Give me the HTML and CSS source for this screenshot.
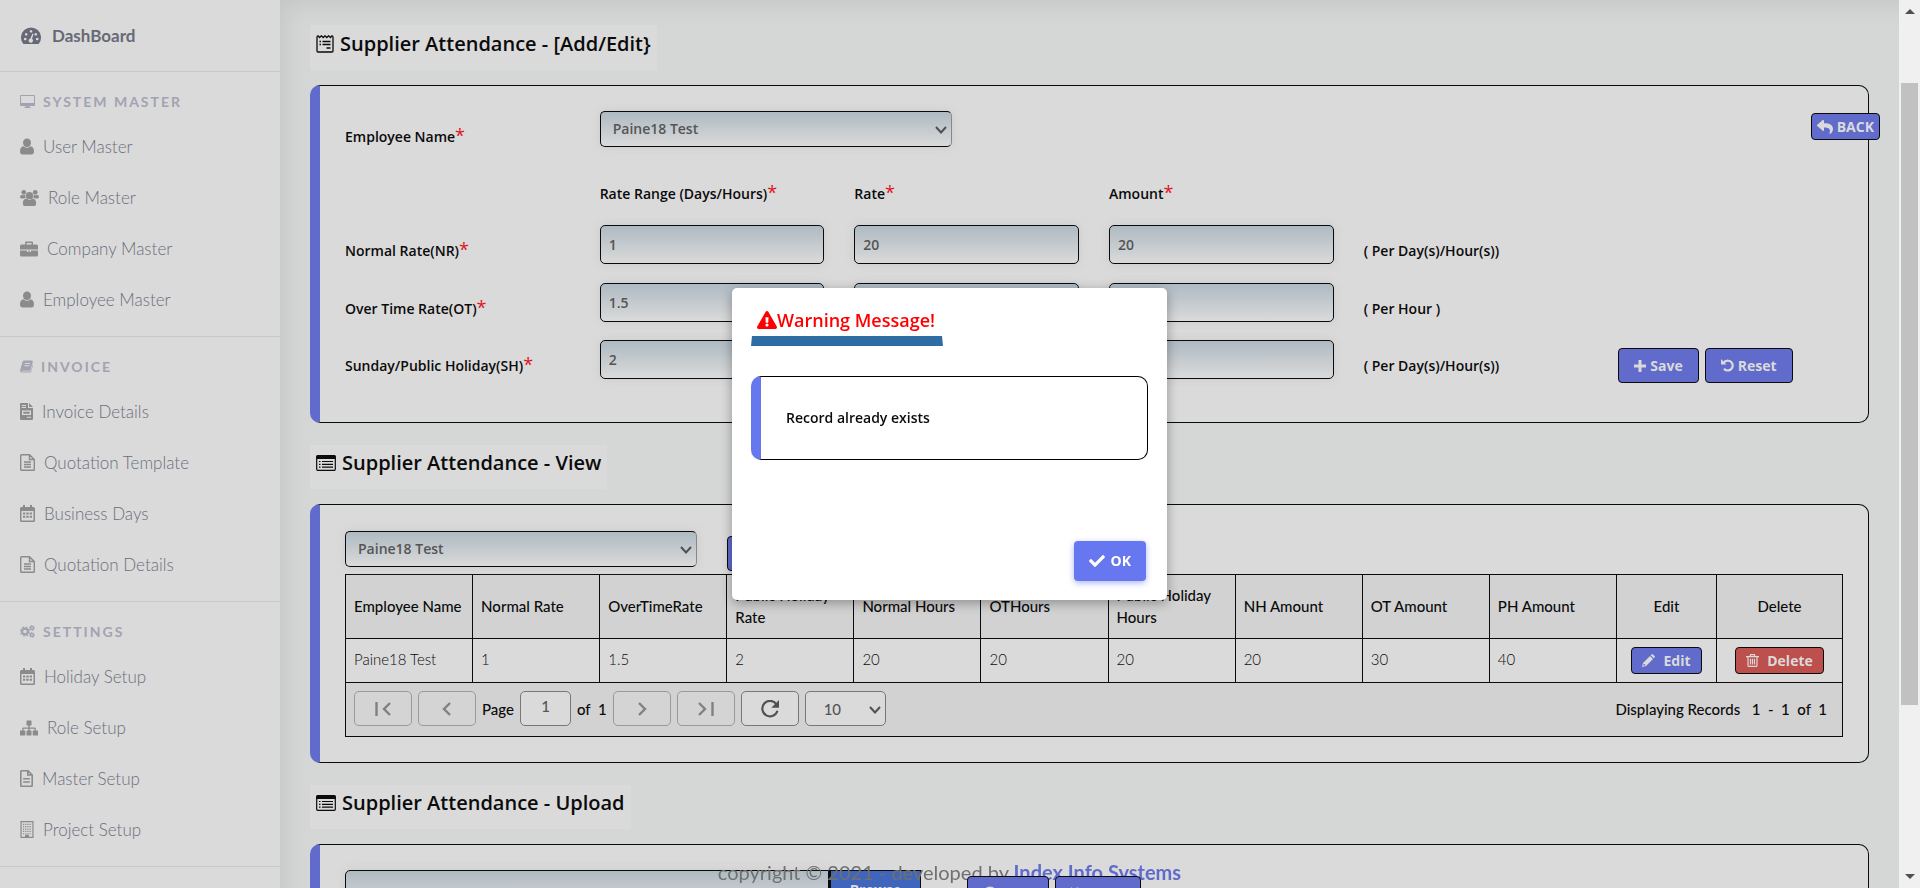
FILE: index.html
```html
<!DOCTYPE html>
<html lang="en">
<head>
<meta charset="utf-8">
<title>Supplier Attendance</title>
<link rel="stylesheet" href="styles.css">
</head>
<body>
<svg class="sprite" aria-hidden="true">
  <symbol id="gauge" viewBox="0 0 20 16"><path fill-rule="evenodd" d="M2 15.500A10 10 0 1 1 18 15.500Q17.500 16 17 16H3Q2.500 16 2 15.500ZM4.200 9.700a1.300 1.300 0 1 0 .01 0ZM5.200 5a1.300 1.300 0 1 0 .01 0ZM10 2a1.300 1.300 0 1 0 .01 0ZM14.800 5a1.300 1.300 0 1 0 .01 0ZM16.200 9.700a1.300 1.300 0 1 0 .01 0ZM11.500 5.600L9.400 10.400A2.200 2.200 0 1 0 11 10.700L12.600 6Z"/></symbol>
  <symbol id="desktop" viewBox="0 0 15 13"><path fill-rule="evenodd" d="M1 0H14Q15 0 15 1V10Q15 11 14 11H9.500V12H10.500V13H4.500V12H5.500V11H1Q0 11 0 10V1Q0 0 1 0ZM1 1V8H14V1Z"/></symbol>
  <symbol id="user" viewBox="0 0 14 16"><path d="M7 0C9.400 0 11 1.700 11 4.200S9.300 8.600 7 8.600S3 6.700 3 4.200S4.600 0 7 0ZM3.600 7.700Q7 11 10.400 7.700C13 8 14 10 14 13Q14 16 11.300 16H2.700Q0 16 0 13C0 10 1 8 3.600 7.700Z"/></symbol>
  <symbol id="users" viewBox="0 0 20 17"><circle cx="10" cy="6" r="3.800"/><circle cx="4" cy="2.500" r="2.500"/><circle cx="16" cy="2.500" r="2.500"/><path d="M6.700 9Q10 12 13.300 9C16 9.500 17 11.500 17 14Q17 17 14.300 17H5.700Q3 17 3 14C3 11.500 4 9.500 6.700 9ZM2 5Q4 6.300 5.500 5.200Q5.300 7 6.200 8.200Q5 8.200 4 9H1.500Q0 9 0 7.500Q0 5.300 2 5ZM18 5Q16 6.300 14.500 5.200Q14.700 7 13.800 8.200Q15 8.200 16 9H18.500Q20 9 20 7.500Q20 5.300 18 5Z"/></symbol>
  <symbol id="briefcase" viewBox="0 0 18 15"><path fill-rule="evenodd" d="M5 3V1Q5 0 6 0H12Q13 0 13 1V3H16.500Q18 3 18 4.500V8H0V4.500Q0 3 1.500 3ZM6.500 3H11.500V1.500H6.500ZM0 9H7V10.500H11V9H18V13.500Q18 15 16.500 15H1.500Q0 15 0 13.500ZM8 9H10V10H8Z"/></symbol>
  <symbol id="book" viewBox="0 0 13 12"><path fill-rule="evenodd" d="M4 0H12Q13 .5 12.800 1.500L10.500 9.500Q10.200 10.300 9.300 10.300H2Q1.200 10.400 1.600 11H9.600Q10.600 11 11 10L12.800 3.500Q13.300 4 13 4.800L11.400 10.500Q11 12 9.500 12H1.500Q0 11.500 0 10L2.500 1.500Q2.900 0 4 0ZM5 2.500L4.800 3.400H10L10.300 2.500ZM4.400 4.800L4.200 5.700H9.400L9.600 4.800Z"/></symbol>
  <symbol id="invoice" viewBox="0 0 13 17"><path fill-rule="evenodd" d="M1 0H8V5H13V16Q13 17 12 17H1Q0 17 0 16V1Q0 0 1 0ZM9 0L13 4H9ZM1.700 2V3H6V2ZM1.700 4V5H6V4ZM2 7.500V12H11V7.500ZM3.300 8.700H9.700V10.800H3.300ZM7 13.700V14.700H11V13.700Z"/></symbol>
  <symbol id="file" viewBox="0 0 15 17"><path fill="none" stroke="currentColor" stroke-width="1.400" d="M1.500.7H9.500L14.300 5.500V15.500Q14.300 16.300 13.500 16.300H1.500Q.7 16.300 .7 15.500V1.500Q.7 .7 1.500 .7ZM9.500 .7V5.500H14.300M4 8H11M4 10.500H11M4 13H11"/></symbol>
  <symbol id="file2" viewBox="0 0 13 17"><path fill="none" stroke="currentColor" stroke-width="1.600" d="M1.500.8H8L12.200 5V15.500Q12.200 16.200 11.500 16.200H1.500Q.8 16.200 .8 15.500V1.500Q.8 .8 1.500 .8ZM7.800 .8V5H12.200M3.200 8.800H9.800M3.200 12H9.800"/></symbol>
  <symbol id="calendar" viewBox="0 0 15 17"><path fill-rule="evenodd" d="M3 0H5V2H10V0H12V2H13.500Q15 2 15 3.500V15.500Q15 17 13.500 17H1.500Q0 17 0 15.500V3.500Q0 2 1.500 2H3ZM1.500 6V15.500H13.500V6ZM3 7.500H5.300V9.500H3ZM6.300 7.500H8.700V9.500H6.300ZM9.700 7.500H12V9.500H9.700ZM3 10.700H5.300V12.700H3ZM6.300 10.700H8.700V12.700H6.300ZM9.700 10.700H12V12.700H9.700Z"/></symbol>
  <symbol id="cogs" viewBox="0 0 15 13"><circle cx="5" cy="6.500" r="2.900" fill="none" stroke="currentColor" stroke-width="2.200"/><circle cx="5" cy="6.500" r="4.400" fill="none" stroke="currentColor" stroke-width="1.500" stroke-dasharray="1.700 1.750"/><g fill="none" stroke="currentColor"><circle cx="12" cy="3" r="1.600" stroke-width="1.500"/><circle cx="12" cy="3" r="2.500" stroke-dasharray="1.200 1.400"/><circle cx="12" cy="10" r="1.600" stroke-width="1.500"/><circle cx="12" cy="10" r="2.500" stroke-dasharray="1.200 1.400"/></g></symbol>
  <symbol id="sitemap" viewBox="0 0 18 15"><path d="M7 0H11Q11.500 0 11.500 .5V4.500Q11.500 5 11 5H9.700V7H14.500Q15.800 7 15.800 8.300V10H17.500Q18 10 18 10.500V14.500Q18 15 17.500 15H13.200Q12.700 15 12.700 14.500V10.500Q12.700 10 13.200 10H14.500V8.300H9.700V10H11Q11.500 10 11.500 10.500V14.500Q11.500 15 11 15H7Q6.500 15 6.500 14.500V10.500Q6.500 10 7 10H8.300V8.300H3.500V10H4.800Q5.300 10 5.300 10.500V14.500Q5.300 15 4.800 15H.5Q0 15 0 14.500V10.500Q0 10 .5 10H2.200V8.300Q2.200 7 3.500 7H8.300V5H7Q6.500 5 6.500 4.500V.5Q6.500 0 7 0Z"/></symbol>
  <symbol id="building" viewBox="0 0 14 18"><path fill="none" stroke="currentColor" stroke-width="1.300" d="M.7 .7H13.300V17.300H.7Z"/><path fill="none" stroke="currentColor" stroke-width="1.300" stroke-dasharray="1.300 1" d="M2.700 3.500H12M2.700 6H12M2.700 8.500H12M2.700 11H12M2.700 13.500H12"/><path d="M5 14.500H9V17.500H5Z"/></symbol>
  <symbol id="form" viewBox="0 0 18 18"><path fill="none" stroke="currentColor" stroke-width="1.300" d="M1 1.500V16Q1 17 2 17H16Q17 17 17 16V1.500M1 1.500L2 .8L3.600 2.500L5.400 .8L7.200 2.500L9 .8L10.800 2.500L12.600 .8L14.400 2.500L16 .8L17 1.500M3.500 6.500H5M6.500 6.500H14.500M3.500 9.500H5M6.500 9.500H14.500M10.500 13H14.500"/></symbol>
  <symbol id="list" viewBox="0 0 20 16"><path fill="none" stroke="currentColor" stroke-width="1.200" d="M.7 3V14.300Q.7 15.300 1.700 15.300H18.300Q19.300 15.300 19.300 14.300V3M3 6.500H4.500M6 6.500H17M3 9.300H4.500M6 9.300H17M3 12.100H4.500M6 12.100H17"/><path d="M0 4V1.500Q0 0 1.500 0H18.500Q20 0 20 1.500V4Z"/></symbol>
  <symbol id="reply" viewBox="0 20 512 480"><path d="M8.309 189.836L184.313 37.851C199.719 24.546 224 35.347 224 56.015v80.053c160.629 1.839 288 34.032 288 186.258 0 61.441-39.581 122.309-83.333 154.132-13.653 9.931-33.111-2.533-28.077-18.631 45.344-145.012-21.507-183.510-176.590-185.742V360c0 20.700-24.300 31.453-39.687 18.164l-176.004-152c-11.071-9.562-11.086-26.753 0-36.328z"/></symbol>
  <symbol id="plus" viewBox="0 0 12 12"><path d="M4.500 0H7.500V4.500H12V7.500H7.500V12H4.500V7.500H0V4.500H4.500Z"/></symbol>
  <symbol id="undo" viewBox="0 0 13 13"><path d="M0 0V5.500H5.500Z"/><path fill="none" stroke="currentColor" stroke-width="2.200" d="M2 4.300Q4.300 1.300 7.300 1.700A4.900 4.900 0 1 1 3 9.700"/></symbol>
  <symbol id="pencil" viewBox="0 0 13 13"><path fill-rule="evenodd" d="M8 2L11 5L4 12L0 13L1 9ZM8.700 1.300L9.600 .4Q10.200 -.2 10.900 .4L12.600 2.100Q13.200 2.800 12.600 3.400L11.700 4.300ZM1.800 9.800L1.300 11.300L1.900 11.800L3.300 11.300L3.300 10.400L2.500 10.300Z"/></symbol>
  <symbol id="trash" viewBox="0 0 13 13"><path fill="none" stroke="currentColor" stroke-width="1.200" d="M0 2.600H13M4 2.500L4.600 .7H8.400L9 2.500M2 3V11.500Q2 12.400 3 12.400H10Q11 12.400 11 11.500V3M4.500 4.800V10.500M6.500 4.800V10.500M8.500 4.800V10.500"/></symbol>
  <symbol id="check" viewBox="0 60 512 390"><path d="M173.898 439.404l-166.400-166.400c-9.997-9.997-9.997-26.206 0-36.204l36.203-36.204c9.997-9.998 26.207-9.998 36.204 0L192 312.690 432.095 72.596c9.997-9.997 26.207-9.997 36.204 0l36.203 36.204c9.997 9.997 9.997 26.206 0 36.204l-294.400 294.401c-9.998 9.997-26.207 9.997-36.204-.001z"/></symbol>
  <symbol id="warn" viewBox="0 0 576 512"><path d="M569.517 440.013C587.975 472.007 564.806 512 527.940 512H48.054c-36.937 0-59.999-40.055-41.577-71.987L246.423 23.985c18.467-32.009 64.720-31.951 83.154 0l239.940 416.028zM288 354c-25.405 0-46 20.595-46 46s20.595 46 46 46 46-20.595 46-46-20.595-46-46-46zm-43.673-165.346l7.418 136c.347 6.364 5.609 11.346 11.982 11.346h48.546c6.373 0 11.635-4.982 11.982-11.346l7.418-136c.375-6.874-5.098-12.654-11.982-12.654h-63.383c-6.884 0-12.356 5.780-11.981 12.654z"/></symbol>
  <symbol id="first" viewBox="0 0 16 16"><path fill="none" stroke="currentColor" stroke-width="2.400" d="M1.500 1V15M15 2L9 8L15 14"/></symbol>
  <symbol id="prev" viewBox="0 0 16 16"><path fill="none" stroke="currentColor" stroke-width="2.400" d="M11 2L5 8L11 14"/></symbol>
  <symbol id="next" viewBox="0 0 16 16"><path fill="none" stroke="currentColor" stroke-width="2.400" d="M5 2L11 8L5 14"/></symbol>
  <symbol id="last" viewBox="0 0 16 16"><path fill="none" stroke="currentColor" stroke-width="2.400" d="M1 2L7 8L1 14M14.500 1V15"/></symbol>
  <symbol id="refresh" viewBox="0 0 20 20"><path fill="none" stroke="currentColor" stroke-width="2.400" d="M17 4.500A8.600 8.600 0 1 0 18.300 12"/><path d="M20 0V8.500H11.500Z"/></symbol>
  <symbol id="chevron" viewBox="0 0 12 8"><path fill="none" stroke="currentColor" stroke-width="2" d="M1 1L6 6.500L11 1"/></symbol>
  <symbol id="search" viewBox="0 0 13 13"><circle cx="5.500" cy="5.500" r="4.300" fill="none" stroke="currentColor" stroke-width="2.200"/><path stroke="currentColor" stroke-width="2.400" d="M8.500 8.500L12.500 12.500"/></symbol>
  <symbol id="circle" viewBox="0 0 14 14"><circle cx="7" cy="7" r="7"/></symbol>
</svg>

<div class="page">
  <nav class="sidebar">
    <a class="dash" href="#"><svg class="i20"><use href="#gauge"/></svg>DashBoard</a>
    <section class="group">
      <h2><svg class="i15"><use href="#desktop"/></svg>SYSTEM MASTER</h2>
      <a href="#"><svg class="i14"><use href="#user"/></svg>User Master</a>
      <a href="#"><svg class="i19"><use href="#users"/></svg>Role Master</a>
      <a href="#"><svg class="i18"><use href="#briefcase"/></svg>Company Master</a>
      <a href="#"><svg class="i14"><use href="#user"/></svg>Employee Master</a>
    </section>
    <section class="group">
      <h2><svg class="i13"><use href="#book"/></svg>INVOICE</h2>
      <a href="#"><svg class="i13"><use href="#invoice"/></svg>Invoice Details</a>
      <a href="#"><svg class="i15"><use href="#file"/></svg>Quotation Template</a>
      <a href="#"><svg class="i15"><use href="#calendar"/></svg>Business Days</a>
      <a href="#"><svg class="i15"><use href="#file"/></svg>Quotation Details</a>
    </section>
    <section class="group">
      <h2><svg class="i15"><use href="#cogs"/></svg>SETTINGS</h2>
      <a href="#"><svg class="i15"><use href="#calendar"/></svg>Holiday Setup</a>
      <a href="#"><svg class="i18"><use href="#sitemap"/></svg>Role Setup</a>
      <a href="#"><svg class="i13"><use href="#file2"/></svg>Master Setup</a>
      <a href="#"><svg class="i14"><use href="#building"/></svg>Project Setup</a>
    </section>
    <section class="group"></section>
  </nav>

  <main class="main">
    <h1 class="title"><svg class="i18"><use href="#form"/></svg>Supplier Attendance - [Add/Edit}</h1>
    <form class="card rates">
      <label class="c2 lab" for="emp">Employee Name<b>*</b></label>
      <div class="c3 pick"><select id="emp"><option>Paine18 Test</option></select><svg class="i12"><use href="#chevron"/></svg></div>
      <div class="c7 end"><button type="button" class="btn back"><svg class="i16"><use href="#reply"/></svg>BACK</button></div>

      <span class="c2"></span>
      <span class="c2 lab">Rate Range (Days/Hours)<b>*</b></span>
      <span class="c2 lab">Rate<b>*</b></span>
      <span class="c6 lab">Amount<b>*</b></span>

      <label class="c2 lab" for="nr">Normal Rate(NR)<b>*</b></label>
      <div class="c2"><input id="nr" value="1"></div>
      <div class="c2"><input aria-label="Normal rate" value="20"></div>
      <div class="c2"><input aria-label="Normal amount" value="20"></div>
      <span class="c4 lab">( Per Day(s)/Hour(s))</span>

      <label class="c2 lab" for="ot">Over Time Rate(OT)<b>*</b></label>
      <div class="c2"><input id="ot" value="1.5"></div>
      <div class="c2"><input aria-label="Overtime rate" value=""></div>
      <div class="c2"><input aria-label="Overtime amount" value=""></div>
      <span class="c4 lab">( Per Hour )</span>

      <label class="c2 lab" for="sh">Sunday/Public Holiday(SH)<b>*</b></label>
      <div class="c2"><input id="sh" value="2"></div>
      <div class="c2"><input aria-label="Holiday rate" value=""></div>
      <div class="c2"><input aria-label="Holiday amount" value=""></div>
      <span class="c2 lab">( Per Day(s)/Hour(s))</span>
      <div class="c2 actions"><button type="button" class="btn wide"><svg class="i12"><use href="#plus"/></svg>Save</button><button type="button" class="btn wide"><svg class="i13"><use href="#undo"/></svg>Reset</button></div>
    </form>

    <h1 class="title"><svg class="i20"><use href="#list"/></svg>Supplier Attendance - View</h1>
    <section class="card">
      <div class="filter">
        <div class="pick"><select aria-label="Employee"><option>Paine18 Test</option></select><svg class="i12"><use href="#chevron"/></svg></div>
        <button type="button" class="btn wide"><svg class="i13"><use href="#search"/></svg>Search</button>
      </div>
      <table class="grid">
        <colgroup><col><col><col><col><col><col><col><col><col><col><col class="edit"><col class="del"></colgroup>
        <thead><tr><th>Employee Name</th><th>Normal Rate</th><th>OverTimeRate</th><th>Public Holiday Rate</th><th>Normal Hours</th><th>OTHours</th><th>Public Holiday Hours</th><th>NH Amount</th><th>OT Amount</th><th>PH Amount</th><th class="mid">Edit</th><th class="mid">Delete</th></tr></thead>
        <tbody><tr><td>Paine18 Test</td><td>1</td><td>1.5</td><td>2</td><td>20</td><td>20</td><td>20</td><td>20</td><td>30</td><td>40</td><td class="mid"><button type="button" class="btn small"><svg class="i13"><use href="#pencil"/></svg>Edit</button></td><td class="mid"><button type="button" class="btn small red"><svg class="i13"><use href="#trash"/></svg>Delete</button></td></tr></tbody>
        <tfoot><tr><td colspan="12"><div class="pager">
          <button type="button" class="pg off" aria-label="First"><svg class="i16"><use href="#first"/></svg></button>
          <button type="button" class="pg off" aria-label="Previous"><svg class="i16"><use href="#prev"/></svg></button>
          <label for="pageno">Page</label><input id="pageno" value="1"><span>of&nbsp; 1</span>
          <button type="button" class="pg off" aria-label="Next"><svg class="i16"><use href="#next"/></svg></button>
          <button type="button" class="pg off" aria-label="Last"><svg class="i16"><use href="#last"/></svg></button>
          <button type="button" class="pg" aria-label="Refresh"><svg class="i20"><use href="#refresh"/></svg></button>
          <div class="pick size"><select aria-label="Page size"><option>10</option></select><svg class="i12"><use href="#chevron"/></svg></div>
          <span class="count">Displaying Records &nbsp; 1 &nbsp;-&nbsp; 1 &nbsp;of&nbsp; 1</span>
        </div></td></tr></tfoot>
      </table>
    </section>

    <h1 class="title"><svg class="i20"><use href="#list"/></svg>Supplier Attendance - Upload</h1>
    <section class="card upload">
      <div class="file"><input aria-label="File"><button type="button" class="browse">Browse</button></div>
      <div class="actions"><button type="button" class="btn wide"><svg class="i14"><use href="#circle"/></svg>Save</button><button type="button" class="btn wide"><svg class="i13"><use href="#undo"/></svg>Clear</button></div>
    </section>
  </main>
  <div class="scroll" aria-hidden="true"><i class="up"></i><i class="thumb"></i><i class="down"></i></div>
</div>

<footer class="foot">copyright © 2021 - developed by <a href="#">Index Info Systems</a></footer>

<div class="layer">
  <div class="modal" role="dialog" aria-labelledby="mt">
    <h2 id="mt"><svg class="i20"><use href="#warn"/></svg>Warning Message!</h2>
    <p>Record already exists</p>
    <button type="button" class="ok"><svg class="i16"><use href="#check"/></svg>OK</button>
  </div>
</div>
</body>
</html>
```

FILE: styles.css
```css
* { box-sizing: border-box; }
html, body { height: 100%; margin: 0; overflow: hidden; }
body { font: 600 14px/22px "Open Sans", sans-serif; color: #0b0b0b; background: #d5d7d6; }
a { color: inherit; text-decoration: none; }
button, input, select { font: inherit; margin: 0; }
.sprite { position: absolute; width: 0; height: 0; }
svg { fill: currentColor; flex: none; }
.i12 { width: 12px; height: 12px; }
.i13 { width: 13px; height: 17px; }
.i14 { width: 14px; height: 17px; }
.i15 { width: 15px; height: 17px; }
.i16 { width: 16px; height: 16px; }
.i18 { width: 18px; height: 18px; }
.i19 { width: 19px; height: 18px; }
.i20 { width: 20px; height: 18px; }

.page { display: flex; height: 100vh; overflow: hidden; }

/* Sidebar */
.sidebar { flex: none; width: 280px; background: #dadada; font: 300 17px/51px Lato, sans-serif; color: #6b6e7a; }
.sidebar a { display: flex; align-items: center; gap: 9px; padding: 0 20px; }
.sidebar svg { color: #8b8b8b; }
.sidebar .dash { height: 71px; gap: 11px; padding: 0 21px; font-weight: 700; color: #676976; }
.sidebar .dash svg { color: #676976; }
.group { border-top: 1px solid #c8c8cc; padding-bottom: 11px; }
.group h2 { display: flex; align-items: center; gap: 8px; margin: 0; padding: 10px 20px 0; font-size: 14px; line-height: 39px; font-weight: 700; letter-spacing: 2px; color: #a2a3b1; }
.group h2 svg { height: 13px; color: #a2a3b1; }

/* Content */
.main { flex: 1; min-width: 0; padding: 25px 30px 0 30px; box-shadow: inset 20px 20px 30px -20px #bfc2c0; }
.title { display: flex; align-items: center; gap: 6px; width: max-content; height: 45px; margin: 0 0 15px; padding: 0 6px 8px; background: #dadada; font-size: 20px; line-height: 30px; font-weight: 600; }
.card { margin-bottom: 22px; padding: 25px; background: #dadada; border: 1px solid #0b0b0b; border-left: 10px solid #606bcc; border-radius: 10px; }
.card + .title { height: 44px; }
.rates { display: grid; grid-template-columns: repeat(12, 1fr); grid-template-rows: 57px 57px 58px 57px 57px; padding: 25px 10px; }
.rates > * { padding: 0 15px; min-width: 0; }
.c2 { grid-column: span 2; }
.c3 { grid-column: span 3; }
.c4 { grid-column: span 4; }
.c6 { grid-column: span 6; }
.c7 { grid-column: span 7; }
.rates .lab { padding-top: 15px; white-space: nowrap; }
.lab b { color: #e0141c; font-size: 18px; line-height: 18px; font-weight: 400; }
.card input, .card select { display: block; width: 100%; height: 39px; padding: 0 8px; color: #555; border: 1px solid #0b0b0b; border-radius: 5px; background: linear-gradient(#aebac2, #dadada); box-shadow: 0 0 10px #cbcbcb; }
.card select { height: 36px; padding: 0 12px; border-right-color: #888; appearance: none; }
.pick { display: grid; }
.pick select, .pick svg { grid-area: 1 / 1; }
.pick svg { height: 8px; justify-self: end; margin: 15px 5px 0 0; color: #505050; z-index: 1; pointer-events: none; }
.btn { display: flex; align-items: center; justify-content: center; gap: 4px; height: 27px; padding: 0 5px; color: #dadada; background: #606bcc; border: 1px solid #0b0b0b; border-radius: 4px; font-weight: 700; line-height: 20px; }
.wide { height: 35px; padding: 0 15px; }
.end { display: flex; justify-content: flex-end; margin-right: -37px; }
.rates .end { padding-top: 2px; }
.actions { display: flex; gap: 6px; }
.rates .actions { padding-top: 8px; }
.filter { display: flex; gap: 30px; height: 44px; padding-top: 1px; }
.filter .pick { width: 352px; height: 36px; }
.filter .btn { margin-top: 5px; }

/* Table */
.grid { width: 100%; table-layout: fixed; border-collapse: collapse; font-family: Lato, sans-serif; font-size: 15px; }
.edit { width: 100px; }
.del { width: 126px; }
.grid th, .grid td { border: 1px solid #0b0b0b; padding: 0 8px; text-align: left; }
.grid thead, .grid tfoot { background: #d2d2d2; }
.grid th { height: 64px; font-weight: 500; padding-bottom: 2px; }
.grid tbody td { height: 44px; padding-bottom: 4px; font-weight: 300; }
.grid tbody .mid { padding-bottom: 0; }
.grid .mid { text-align: center; }
.small { margin: 0 auto; gap: 8px; padding: 0 10px; font-family: "Open Sans", sans-serif; font-size: 14px; }
.red { background: #bd4f4c; }
.pager { display: flex; align-items: center; gap: 6px; height: 53px; padding-bottom: 2px; font-weight: 500; }
.pg { display: flex; align-items: center; justify-content: center; width: 58px; height: 35px; padding: 0; color: #505050; background: #dadada; border: 1px solid #777; border-radius: 5px; }
.pg.off { color: #818181; background: #d4d4d4; border-color: #999; }
.pager input, .pager select { background: #dadada; border-color: #777; box-shadow: none; height: 35px; }
.pager input { width: 51px; padding: 0 0 5px; text-align: center; }
.pager select { width: 81px; padding: 0 18px; }
.count { margin-left: auto; padding-right: 7px; }

/* Upload */
.upload { display: flex; gap: 46px; height: 120px; }
.upload .actions { padding-top: 6px; }
.file { display: flex; width: 576px; }
.file input { flex: 1; border-radius: 5px 0 0 5px; }
.browse { width: 92px; height: 39px; color: #dadada; background: #3f65bd; border: 1px solid #0b0b0b; border-left-width: 2px; font-weight: 700; }
.upload .actions .btn { position: relative; z-index: 3; }
.foot { position: fixed; left: 0; right: 21px; bottom: 0; z-index: 2; text-align: center; font: 400 20px/32px Lato, sans-serif; color: #707070; }
.foot a { color: #606bcc; font-weight: 700; }

/* Scroll track */
.scroll { flex: none; display: flex; flex-direction: column; align-items: center; width: 21px; padding: 9px 0; background: #f0f0f0; }
.up, .down { border: 5px solid transparent; }
.up { border-top: 0; border-bottom-color: #505050; }
.down { margin-top: auto; border-bottom: 0; border-top-color: #505050; }
.thumb { width: 17px; height: 70vh; margin-top: 69px; background: #c1c1c1; }

/* Dialog */
.layer { position: fixed; inset: 0 21px 0 0; z-index: 5; display: flex; align-items: center; justify-content: center; }
.modal { display: flex; flex-direction: column; width: 435px; height: 312px; padding: 19px; background: #fff; border-radius: 5px; box-shadow: 0 3px 12px #00000055; }
.modal h2 { display: flex; align-items: center; align-self: flex-start; margin: 0 0 30px; padding: 0 7px 3px 5px; border: solid #2e6da4; border-width: 0 0 10px; border-left: 1px solid transparent; border-right: 1px solid transparent; color: #f00; font-size: 18px; line-height: 26px; font-weight: 600; }
.modal p { margin: 0; padding: 30px 25px; border: 1px solid #000; border-left: 10px solid #6777ef; border-radius: 10px; }
.ok { display: flex; align-items: center; gap: 6px; align-self: flex-end; height: 40px; margin: auto 2px 0; padding: 0 15px; color: #fff; background: #6777ef; border: 0; border-radius: 4px; box-shadow: 0 2px 6px #acb5f6; font-weight: 700; }
```
